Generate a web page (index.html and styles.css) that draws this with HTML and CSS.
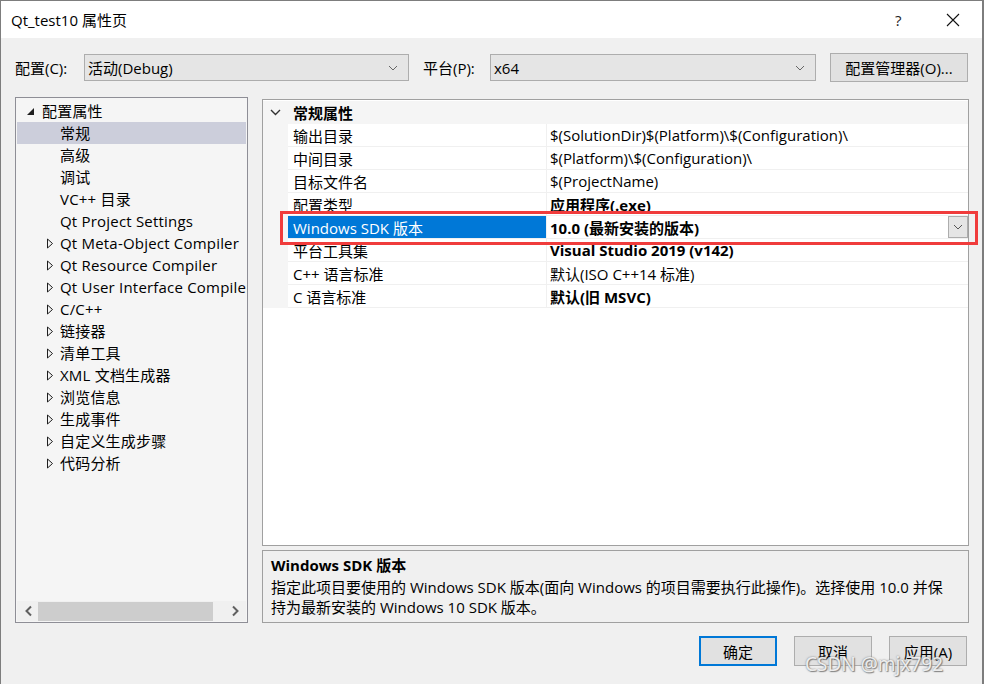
FILE: index.html
```html
<html>
  <head>
    <title>Qt_test10 属性页</title>
    <meta charset="utf-8">
    <link rel="stylesheet" href="styles.css">
  </head>
  <body>
    <div class="ventana">
      <div class="titulo">
        <span class="titulo-texto">Qt_test10 属性页</span>
        <span class="ayuda">?</span>
        <span class="cerrar">
          <svg width="14" height="14" viewBox="0 0 14 14"><path d="M1 1 L13 13 M13 1 L1 13" stroke="#111" stroke-width="1.1" fill="none"/></svg>
        </span>
      </div>

      <div class="cuerpo">
        <div class="barra">
          <span class="etiqueta">配置(C):</span>
          <div class="combo combo-config">
            <span>活动(Debug)</span>
            <svg width="10" height="6" viewBox="0 0 10 6"><path d="M1 1 L5 5 L9 1" stroke="#666" fill="none"/></svg>
          </div>
          <span class="etiqueta etiqueta-plat">平台(P):</span>
          <div class="combo combo-plat">
            <span>x64</span>
            <svg width="10" height="6" viewBox="0 0 10 6"><path d="M1 1 L5 5 L9 1" stroke="#666" fill="none"/></svg>
          </div>
          <div class="boton boton-gestor">配置管理器(O)...</div>
        </div>

        <div class="principal">
          <div class="arbol">
            <div class="arbol-lista">
              <div class="nodo raiz"><span class="flecha"><svg width="9" height="9" viewBox="0 0 9 9"><path d="M8 1 L8 8 L1 8 Z" fill="#1e1e1e"/></svg></span>配置属性</div>
              <div class="nodo hijo sel"><span class="flecha"></span>常规</div>
              <div class="nodo hijo"><span class="flecha"></span>高级</div>
              <div class="nodo hijo"><span class="flecha"></span>调试</div>
              <div class="nodo hijo"><span class="flecha"></span>VC++ 目录</div>
              <div class="nodo hijo"><span class="flecha"></span>Qt Project Settings</div>
              <div class="nodo hijo"><span class="flecha"><svg width="8" height="11" viewBox="0 0 8 11"><path d="M1.5 1 L6.5 5.5 L1.5 10 Z" stroke="#1e1e1e" fill="none"/></svg></span>Qt Meta-Object Compiler</div>
              <div class="nodo hijo"><span class="flecha"><svg width="8" height="11" viewBox="0 0 8 11"><path d="M1.5 1 L6.5 5.5 L1.5 10 Z" stroke="#1e1e1e" fill="none"/></svg></span>Qt Resource Compiler</div>
              <div class="nodo hijo"><span class="flecha"><svg width="8" height="11" viewBox="0 0 8 11"><path d="M1.5 1 L6.5 5.5 L1.5 10 Z" stroke="#1e1e1e" fill="none"/></svg></span>Qt User Interface Compiler</div>
              <div class="nodo hijo"><span class="flecha"><svg width="8" height="11" viewBox="0 0 8 11"><path d="M1.5 1 L6.5 5.5 L1.5 10 Z" stroke="#1e1e1e" fill="none"/></svg></span>C/C++</div>
              <div class="nodo hijo"><span class="flecha"><svg width="8" height="11" viewBox="0 0 8 11"><path d="M1.5 1 L6.5 5.5 L1.5 10 Z" stroke="#1e1e1e" fill="none"/></svg></span>链接器</div>
              <div class="nodo hijo"><span class="flecha"><svg width="8" height="11" viewBox="0 0 8 11"><path d="M1.5 1 L6.5 5.5 L1.5 10 Z" stroke="#1e1e1e" fill="none"/></svg></span>清单工具</div>
              <div class="nodo hijo"><span class="flecha"><svg width="8" height="11" viewBox="0 0 8 11"><path d="M1.5 1 L6.5 5.5 L1.5 10 Z" stroke="#1e1e1e" fill="none"/></svg></span>XML 文档生成器</div>
              <div class="nodo hijo"><span class="flecha"><svg width="8" height="11" viewBox="0 0 8 11"><path d="M1.5 1 L6.5 5.5 L1.5 10 Z" stroke="#1e1e1e" fill="none"/></svg></span>浏览信息</div>
              <div class="nodo hijo"><span class="flecha"><svg width="8" height="11" viewBox="0 0 8 11"><path d="M1.5 1 L6.5 5.5 L1.5 10 Z" stroke="#1e1e1e" fill="none"/></svg></span>生成事件</div>
              <div class="nodo hijo"><span class="flecha"><svg width="8" height="11" viewBox="0 0 8 11"><path d="M1.5 1 L6.5 5.5 L1.5 10 Z" stroke="#1e1e1e" fill="none"/></svg></span>自定义生成步骤</div>
              <div class="nodo hijo"><span class="flecha"><svg width="8" height="11" viewBox="0 0 8 11"><path d="M1.5 1 L6.5 5.5 L1.5 10 Z" stroke="#1e1e1e" fill="none"/></svg></span>代码分析</div>
            </div>
            <div class="scroll">
              <svg width="10" height="12" viewBox="0 0 10 12"><path d="M7 1.5 L2.5 6 L7 10.5" stroke="#606060" stroke-width="2" fill="none"/></svg>
              <div class="pulgar"></div>
              <svg width="10" height="12" viewBox="0 0 10 12"><path d="M3 1.5 L7.5 6 L3 10.5" stroke="#606060" stroke-width="2" fill="none"/></svg>
            </div>
          </div>

          <div class="derecha">
            <div class="rejilla">
              <div class="categoria">
                <span class="margen"><svg width="11" height="7" viewBox="0 0 11 7"><path d="M1 1 L5.5 5.5 L10 1" stroke="#333" stroke-width="1.4" fill="none"/></svg></span>
                <span class="cat-texto">常规属性</span>
              </div>
              <div class="fila"><span class="margen"></span><span class="nombre">输出目录</span><span class="valor">$(SolutionDir)$(Platform)\$(Configuration)\</span></div>
              <div class="fila"><span class="margen"></span><span class="nombre">中间目录</span><span class="valor">$(Platform)\$(Configuration)\</span></div>
              <div class="fila"><span class="margen"></span><span class="nombre">目标文件名</span><span class="valor">$(ProjectName)</span></div>
              <div class="fila"><span class="margen"></span><span class="nombre">配置类型</span><span class="valor negrita">应用程序(.exe)</span></div>
              <div class="fila activa"><span class="margen"></span><span class="nombre">Windows SDK 版本</span><span class="valor negrita">10.0 (最新安装的版本)<span class="desplegar"><svg width="10" height="6" viewBox="0 0 10 6"><path d="M1 1 L5 5 L9 1" stroke="#555" fill="none"/></svg></span></span></div>
              <div class="fila"><span class="margen"></span><span class="nombre">平台工具集</span><span class="valor negrita">Visual Studio 2019 (v142)</span></div>
              <div class="fila"><span class="margen"></span><span class="nombre">C++ 语言标准</span><span class="valor">默认(ISO C++14 标准)</span></div>
              <div class="fila"><span class="margen"></span><span class="nombre">C 语言标准</span><span class="valor negrita">默认(旧 MSVC)</span></div>
            </div>
            <div class="descripcion">
              <div class="desc-titulo">Windows SDK 版本</div>
              <div class="desc-texto">指定此项目要使用的 Windows SDK 版本(面向 Windows 的项目需要执行此操作)。选择使用 10.0 并保<br>持为最新安装的 Windows 10 SDK 版本。</div>
            </div>
          </div>
        </div>

        <div class="botones">
          <div class="boton boton-ok">确定</div>
          <div class="boton">取消</div>
          <div class="boton">应用(A)</div>
        </div>
      </div>

      <div class="marca-roja"></div>
      <div class="marca-agua">CSDN @mjx792</div>
    </div>
  </body>
</html>
```

FILE: styles.css
```css
body {
  margin: 0;
  background-color: #2b3440;
  font-family: "Open Sans", "Noto Sans CJK SC", sans-serif;
  font-size: 15px;
  color: #000;
}
.ventana {
  position: relative;
  width: 981px;
  height: 683px;
  border: 1px solid #7d7d7d;
  border-right-width: 2px;
  background-color: #f0f0f0;
  display: flex;
  flex-direction: column;
  overflow: hidden;
}
.titulo {
  height: 37px;
  background-color: white;
  display: flex;
  align-items: center;
}
.titulo-texto {
  padding-left: 10px;
  flex: 1;
}
.ayuda {
  width: 20px;
  margin-right: 31px;
  color: #222;
}
.cerrar {
  width: 14px;
  margin-right: 22px;
  display: flex;
}
.cuerpo {
  flex: 1;
  display: flex;
  flex-direction: column;
  padding: 15px 0 0 14px;
}
.barra {
  display: flex;
  align-items: center;
  height: 29px;
}
.etiqueta {
  width: 69px;
}
.etiqueta-plat {
  width: 67px;
  margin-left: 14px;
}
.combo {
  height: 27px;
  box-sizing: border-box;
  background-color: #e5e5e5;
  border: 1px solid #adadad;
  display: flex;
  align-items: center;
  justify-content: space-between;
  padding: 0 10px 0 3px;
}
.combo-config {
  width: 325px;
}
.combo-plat {
  width: 326px;
}
.boton {
  height: 30px;
  box-sizing: border-box;
  background-color: #e1e1e1;
  border: 1px solid #adadad;
  display: flex;
  align-items: center;
  justify-content: center;
  width: 78px;
}
.boton-gestor {
  width: 138px;
  height: 29px;
  margin-left: 14px;
}
.principal {
  display: flex;
  margin-top: 15px;
  height: 526px;
}
.arbol {
  width: 233px;
  box-sizing: border-box;
  border: 1px solid #8e8e96;
  background-color: #f5f5f5;
  display: flex;
  flex-direction: column;
  overflow: hidden;
}
.arbol-lista {
  flex: 1;
  padding-top: 2px;
  white-space: nowrap;
  overflow: hidden;
}
.nodo {
  height: 22px;
  line-height: 22px;
  display: flex;
  align-items: center;
  margin: 0 1px;
  letter-spacing: 0.2px;
}
.flecha {
  flex-shrink: 0;
}
.raiz {
  padding-left: 9px;
}
.raiz .flecha {
  width: 16px;
}
.hijo {
  padding-left: 29px;
}
.hijo .flecha {
  width: 14px;
  display: flex;
  align-items: center;
}
.sel {
  background-color: #cccedb;
}
.scroll {
  height: 20px;
  margin: 0 1px 1px 1px;
  background-color: #f0f0f0;
  display: flex;
  align-items: center;
  padding: 0 6px 0 7px;
}
.pulgar {
  flex: 1;
  height: 19px;
  margin: 0 17px 0 4px;
  background-color: #cdcdcd;
}
.derecha {
  margin-left: 14px;
  width: 707px;
  display: flex;
  flex-direction: column;
  padding-top: 2px;
}
.rejilla {
  height: 447px;
  box-sizing: border-box;
  border: 1px solid #a0a0a0;
  background-color: white;
  padding-top: 1px;
}
.categoria {
  height: 23px;
  display: flex;
  align-items: center;
  background-color: #f5f5f5;
}
.margen {
  width: 25px;
  height: 100%;
  background-color: #f5f5f5;
  display: flex;
  align-items: center;
  justify-content: center;
  flex-shrink: 0;
}
.cat-texto {
  font-weight: bold;
  padding-left: 5px;
}
.fila {
  height: 23px;
  display: flex;
  align-items: stretch;
}
.nombre {
  width: 259px;
  box-sizing: border-box;
  padding-left: 5px;
  border-bottom: 1px solid #f0f0f0;
  border-right: 1px solid #f0f0f0;
  display: flex;
  align-items: center;
}
.valor {
  flex: 1;
  padding-left: 3px;
  border-bottom: 1px solid #f0f0f0;
  display: flex;
  align-items: center;
  position: relative;
}
.negrita {
  font-weight: bold;
}
.activa .nombre {
  background-color: #0078d7;
  color: white;
}
.desplegar {
  margin-left: auto;
  width: 20px;
  height: 22px;
  box-sizing: border-box;
  background-color: #e5e5e5;
  border: 1px solid #adadad;
  display: flex;
  align-items: center;
  justify-content: center;
}
.descripcion {
  margin-top: 4px;
  height: 73px;
  box-sizing: border-box;
  border: 1px solid #a0a0a0;
  padding: 3px 8px;
}
.desc-titulo {
  font-weight: bold;
  height: 23px;
  line-height: 23px;
}
.desc-texto {
  font-size: 15px;
  line-height: 20px;
  white-space: nowrap;
}
.botones {
  display: flex;
  justify-content: flex-end;
  gap: 17px;
  margin-top: 13px;
  padding-right: 15px;
}
.boton-ok {
  border: 2px solid #0078d7;
}
.marca-roja {
  position: absolute;
  left: 279px;
  top: 210px;
  width: 692px;
  height: 28px;
  border: 3px solid #f03c3c;
}
.marca-agua {
  position: absolute;
  left: 804px;
  top: 650px;
  font-family: "Noto Sans", sans-serif;
  font-size: 19px;
  color: rgba(255, 255, 255, 0.85);
  text-shadow: 0 0 2px #777, 1px 1px 1px #888;
}
```
